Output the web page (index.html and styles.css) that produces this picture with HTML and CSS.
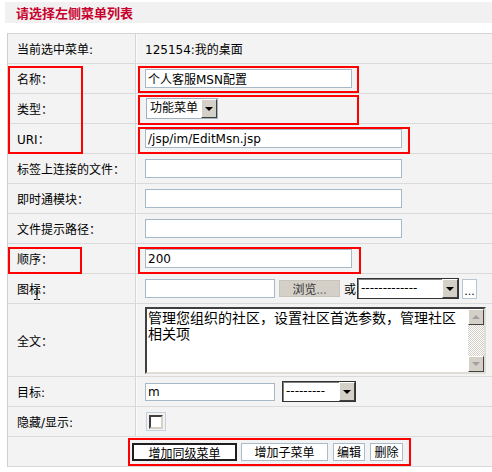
FILE: index.html
```html
<!DOCTYPE html>
<html lang="zh-CN">
<head>
<meta charset="utf-8">
<title>菜单配置</title>
<link rel="stylesheet" href="styles.css">
</head>
<body>
<div class="page">
  <div class="title">请选择左侧菜单列表</div>
  <div class="form-wrap">
    <table class="form">
      <tr><td class="label">当前选中菜单:</td><td class="value">125154:我的桌面</td></tr>
      <tr><td class="label">名称<span class="colon">：</span></td><td class="value"><input class="txt w-md" type="text" value="个人客服MSN配置"></td></tr>
      <tr><td class="label">类型<span class="colon">：</span></td><td class="value"><span class="sel sel-type"><span class="sel-text">功能菜单</span><span class="sel-arrow"><span class="tri"></span></span></span></td></tr>
      <tr><td class="label">URI<span class="colon">：</span></td><td class="value"><input class="txt w-lg" type="text" value="/jsp/im/EditMsn.jsp"></td></tr>
      <tr><td class="label">标签上连接的文件<span class="colon">：</span></td><td class="value"><input class="txt w-lg" type="text" value=""></td></tr>
      <tr><td class="label">即时通模块<span class="colon">：</span></td><td class="value"><input class="txt w-lg" type="text" value=""></td></tr>
      <tr><td class="label">文件提示路径<span class="colon">：</span></td><td class="value"><input class="txt w-lg" type="text" value=""></td></tr>
      <tr><td class="label">顺序<span class="colon">：</span></td><td class="value"><input class="txt w-md" type="text" value="200"></td></tr>
      <tr><td class="label">图标<span class="colon">：</span></td><td class="value">
        <div class="line">
          <input class="txt w-sm" type="text" value="">
          <button class="btn-gray" type="button">浏览<span class="dim">...</span></button>
          <span class="or">或</span>
          <span class="sel sel-dark sel-icon"><span class="sel-text">-------------</span><span class="sel-arrow"><span class="tri"></span></span></span>
          <button class="btn-dots" type="button">...</button>
        </div>
      </td></tr>
      <tr class="tall"><td class="label">全文<span class="colon">：</span></td><td class="value">
        <div class="ta-box">
          <textarea class="ta" rows="4">管理您组织的社区，设置社区首选参数，管理社区相关项</textarea>
          <div class="sb">
            <div class="sb-btn"><span class="sb-tri up"></span></div>
            <div class="sb-track"></div>
            <div class="sb-btn"><span class="sb-tri down"></span></div>
          </div>
        </div>
      </td></tr>
      <tr><td class="label">目标:</td><td class="value">
        <div class="line">
          <input class="txt w-sm target" type="text" value="m">
          <span class="sel sel-dark sel-target"><span class="sel-text">---------</span><span class="sel-arrow"><span class="tri"></span></span></span>
        </div>
      </td></tr>
      <tr><td class="label">隐藏/显示:</td><td class="value"><span class="cb-frame"><input class="cb" type="checkbox"></span></td></tr>
      <tr><td class="actions" colspan="2">
        <button class="btn btn-default" type="button">增加同级菜单</button><button class="btn b2" type="button">增加子菜单</button><button class="btn b3" type="button">编辑</button><button class="btn b4" type="button">删除</button>
      </td></tr>
    </table>
    <div class="mark m-a"></div>
    <div class="mark m-b"></div>
    <div class="mark m-c"></div>
    <div class="mark m-d"></div>
    <div class="mark m-e"></div>
    <div class="mark m-f"></div>
    <div class="mark m-g"></div>
    <svg class="cursor" width="8" height="14" viewBox="0 0 8 14"><path d="M1 0.5H3.5M4.5 0.5H7M4 1V13M1 13.5H3.5M4.5 13.5H7M2.5 7H5.5" stroke="#000" stroke-width="1" fill="none"/></svg>
  </div>
</div>
</body>
</html>
```
FILE: styles.css
```css
* { box-sizing: border-box; }
body {
  margin: 0;
  background: #fff;
  color: #000;
  font: 12px "DejaVu Sans", "Noto Sans CJK SC", sans-serif;
}
.page { padding: 2px 0 0 5px; }
.title {
  height: 21px;
  background: #f1f1f1;
  color: #c8002d;
  font: bold 13px/21px "Noto Sans CJK SC", sans-serif;
  padding-left: 11px;
  margin-bottom: 10px;
}
.form-wrap { position: relative; margin-left: 2px; }
.form {
  border-collapse: separate;
  border-spacing: 0;
  width: 485px;
  border-top: 1px solid #d4d4d4;
  border-left: 1px solid #cfcfcf;
  background: #f3f3f3;
}
.form td {
  height: 30px;
  padding: 0;
  border-bottom: 1px solid #dadada;
  vertical-align: middle;
  white-space: nowrap;
}
.form tr.tall td { height: 73px; }
.form td.label {
  width: 128px;
  padding-left: 9px;
  border-right: 1px solid #d6d6d6;
}
.colon { font-family: "Noto Sans CJK TC", sans-serif; }
.form td.value { padding-left: 9px; box-shadow: inset 1px 0 #fbfbfb; }
.form td.actions { padding-left: 124px; }

.txt {
  height: 19px;
  border: 1px solid #a5b9c9;
  background: #fff;
  padding: 0 2px;
  font: 12px "DejaVu Sans", "Noto Sans CJK SC", sans-serif;
  color: #000;
  vertical-align: middle;
  outline: none;
}
.w-md { width: 207px; }
.w-lg { width: 257px; }
.w-sm { width: 130px; }
.target { height: 18px; }

.line { display: flex; align-items: center; }

.sel {
  display: inline-flex;
  align-items: stretch;
  height: 21px;
  border: 1px solid #9fb3c3;
  background: #fff;
  vertical-align: middle;
}
.sel-text { flex: 1; padding-left: 3px; line-height: 19px; overflow: hidden; }
.sel-arrow {
  width: 16px;
  background: #d4d0c8;
  border: 1px solid;
  border-color: #fff #404040 #404040 #fff;
  display: flex;
  align-items: center;
  justify-content: center;
}
.tri {
  width: 0; height: 0;
  border-left: 4px solid transparent;
  border-right: 4px solid transparent;
  border-top: 4px solid #000;
}
.sel-type { width: 72px; margin-left: 1px; }
.sel-dark {
  border: 1px solid #333;
  box-shadow: inset 1px 1px #808080;
}
.sel-icon { width: 102px; margin-left: 1px; }
.sel-target { width: 74px; margin-left: 7px; }

.btn-gray {
  width: 61px;
  height: 17px;
  margin-left: 4px;
  border: 1px solid #c8c4bc;
  background: #d4d0c8;
  color: #333;
  font: 12px "Noto Sans CJK SC", sans-serif;
  padding: 0;
  line-height: 15px;
}
.dim { color: #777; }
.or { margin-left: 4px; font-family: "Noto Sans CJK SC", sans-serif; }
.btn-dots {
  width: 15px;
  height: 20px;
  margin-left: 3px;
  border: 1px solid #b5c7d5;
  background: #fff;
  font: 11px "DejaVu Sans", sans-serif;
  padding: 0;
  line-height: 24px;
}

.ta-box {
  display: flex;
  width: 341px;
  height: 67px;
  border: 2px solid;
  border-color: #404040 #e0ddd6 #e0ddd6 #404040;
  background: #fff;
}
.ta {
  flex: 1;
  border: 0;
  resize: none;
  overflow: hidden;
  padding: 0 1px;
  margin: 0;
  font: 14px/16px "Noto Sans CJK SC", sans-serif;
  color: #000;
  background: #fff;
  outline: none;
}
.sb {
  width: 16px;
  display: flex;
  flex-direction: column;
  background-color: #fff;
  background-image: repeating-conic-gradient(#d4d0c8 0 25%, #fff 0 50%);
  background-size: 2px 2px;
}
.sb-btn {
  height: 16px;
  background: #d4d0c8;
  border: 1px solid;
  border-color: #fff #404040 #404040 #fff;
  display: flex;
  align-items: center;
  justify-content: center;
}
.sb-track { flex: 1; }
.sb-tri {
  width: 0; height: 0;
  border-left: 4px solid transparent;
  border-right: 4px solid transparent;
}
.sb-tri.up { border-bottom: 4px solid #a0a0a0; }
.sb-tri.down { border-top: 4px solid #a0a0a0; }

.cb-frame {
  display: inline-block;
  width: 20px;
  height: 19px;
  border: 1px solid #c5d0da;
  padding: 2px 0 0 2px;
  vertical-align: middle;
  margin-left: 1px;
}
.cb {
  appearance: none;
  -webkit-appearance: none;
  display: block;
  margin: 0;
  width: 14px;
  height: 14px;
  background: #fff;
  border: 2px solid;
  border-color: #404040 #d4d0c8 #d4d0c8 #404040;
}

.btn {
  height: 18px;
  border: 1px solid #a8bccc;
  background: #fff;
  font: 12px "Noto Sans CJK SC", sans-serif;
  color: #000;
  padding: 0;
  line-height: 16px;
  margin-right: 5px;
  vertical-align: middle;
}
.btn-default { width: 105px; border: 2px solid #1e1e1e; margin-right: 4px; }
.b2 { width: 87px; }
.b3 { width: 32px; }
.b4 { width: 33px; }

.mark {
  position: absolute;
  border: 2px solid #f00;
  pointer-events: none;
}
.m-a { left: 1px; top: 33px; width: 75px; height: 88px; }
.m-b { left: 131px; top: 33px; width: 221px; height: 27px; }
.m-c { left: 131px; top: 62px; width: 221px; height: 30px; }
.m-d { left: 131px; top: 94px; width: 272px; height: 27px; }
.m-e { left: 1px; top: 214px; width: 74px; height: 27px; }
.m-f { left: 131px; top: 214px; width: 223px; height: 27px; }
.m-g { left: 121px; top: 405px; width: 283px; height: 28px; }
.cursor { position: absolute; left: 26px; top: 253px; }
```
